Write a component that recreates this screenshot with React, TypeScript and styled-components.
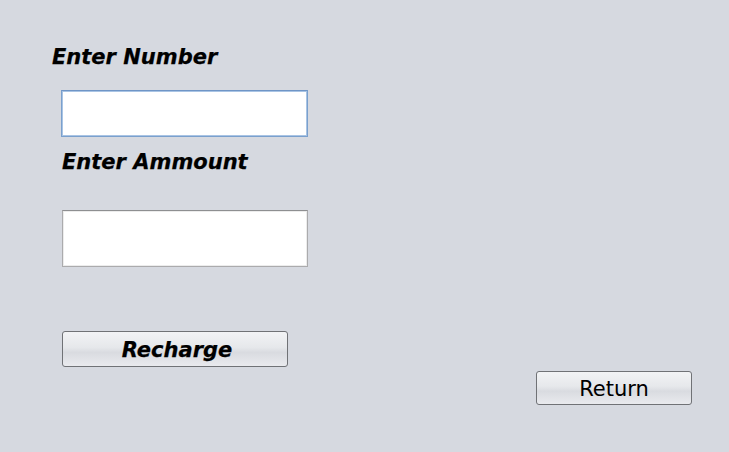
import React from "react";
import styled, { createGlobalStyle } from "styled-components";

const Global = createGlobalStyle`
  html, body { margin: 0; padding: 0; background: #d6d9e0; }
  #root { width: 729px; height: 452px; }
`;

const Frame = styled.div`
  width: 729px;
  height: 452px;
  box-sizing: border-box;
  background: #d6d9e0;
  padding: 44px 37px 0 52px;
  display: flex;
  flex-direction: column;
`;

const Label = styled.div<{ $indent?: number; $mt?: number }>`
  font-family: "DejaVu Sans", Verdana, sans-serif;
  font-weight: bold;
  font-style: italic;
  font-size: 21px;
  letter-spacing: 0;
  line-height: 26px;
  color: #000;
  -webkit-text-stroke: 0.25px #000;
  margin-left: ${(p) => p.$indent ?? 0}px;
  margin-top: ${(p) => p.$mt ?? 0}px;
`;

const Field = styled.input<{ $focused?: boolean; $w: number; $h: number; $indent: number; $mt: number }>`
  box-sizing: border-box;
  width: ${(p) => p.$w}px;
  height: ${(p) => p.$h}px;
  margin: ${(p) => p.$mt}px 0 0 ${(p) => p.$indent}px;
  background: #fff;
  outline: none;
  padding: 0 4px;
  font-size: 16px;
  border: 1px solid ${(p) => (p.$focused ? "#7aa0cd" : "#ababad")};
  border-top-color: ${(p) => (p.$focused ? "#6f95c6" : "#8e8f91")};
  box-shadow: inset 0 0 0 1px ${(p) => (p.$focused ? "#a9c4e4" : "#ececec")};
`;

const ButtonRow = styled.div<{ $end?: boolean; $mt: number; $indent?: number }>`
  display: flex;
  justify-content: ${(p) => (p.$end ? "flex-end" : "flex-start")};
  margin-top: ${(p) => p.$mt}px;
  padding-left: ${(p) => p.$indent ?? 0}px;
`;

const Button = styled.button<{ $w: number; $h: number; $bold?: boolean }>`
  box-sizing: border-box;
  width: ${(p) => p.$w}px;
  height: ${(p) => p.$h}px;
  border: 1px solid #707276;
  border-radius: 3px;
  background: linear-gradient(to bottom, #f2f3f5 0%, #e6e8eb 45%, #d9dbe0 60%, #e9eaee 100%);
  color: #000;
  padding: 3px 0 0 ${(p) => (p.$bold ? "4px" : "0")};
  line-height: 1;
  font-family: "DejaVu Sans", Verdana, sans-serif;
  font-weight: ${(p) => (p.$bold ? "bold" : "normal")};
  font-style: ${(p) => (p.$bold ? "italic" : "normal")};
  font-size: ${(p) => (p.$bold ? "21px" : "21px")};
  -webkit-text-stroke: ${(p) => (p.$bold ? "0.25px #000" : "0")};
`;

export default function App() {
  return (
    <>
      <Global />
      <Frame>
        <Label>Enter Number</Label>
        <Field $focused $w={247} $h={47} $indent={9} $mt={20} />
        <Label $indent={10} $mt={12}>Enter Ammount</Label>
        <Field $w={246} $h={57} $indent={10} $mt={35} />
        <ButtonRow $mt={64} $indent={10}>
          <Button $w={226} $h={36} $bold>Recharge</Button>
        </ButtonRow>
        <ButtonRow $end $mt={4}>
          <Button $w={156} $h={34}>Return</Button>
        </ButtonRow>
      </Frame>
    </>
  );
}
